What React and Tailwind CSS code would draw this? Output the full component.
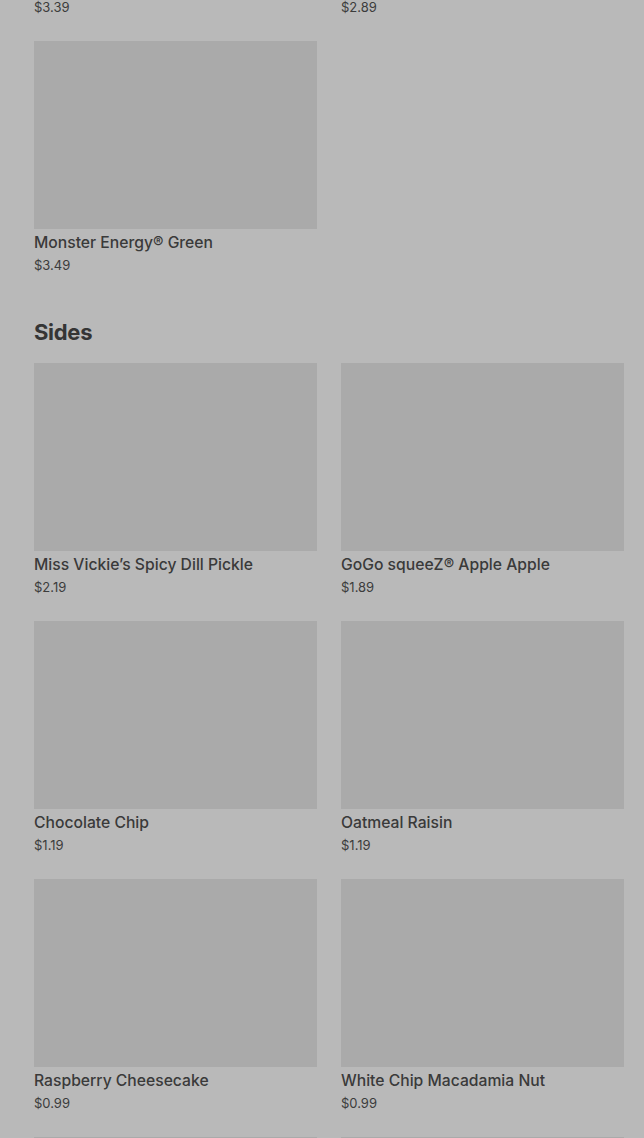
import React from 'react';

const SECTIONS = [
  {
    title: null,
    items: [
      { name: 'Coca-Cola®', price: '$3.39' },
      { name: 'Bottled Water', price: '$2.89' },
      { name: 'Monster Energy® Green', price: '$3.49' },
    ],
  },
  {
    title: 'Sides',
    items: [
      { name: 'Miss Vickie’s Spicy Dill Pickle', price: '$2.19' },
      { name: 'GoGo squeeZ® Apple Apple', price: '$1.89' },
      { name: 'Chocolate Chip', price: '$1.19' },
      { name: 'Oatmeal Raisin', price: '$1.19' },
      { name: 'Raspberry Cheesecake', price: '$0.99' },
      { name: 'White Chip Macadamia Nut', price: '$0.99' },
      { name: 'Double Chocolate Chip', price: '$0.99' },
      { name: 'Sugar Cookie', price: '$0.99' },
    ],
  },
];

function ItemCard({ item }) {
  return (
    <div className="flex flex-col">
      <div className="h-[188px] w-full bg-[#aaaaaa]" />
      <p className="mt-[2px] text-[15.7px] leading-[24px] font-medium text-[#3a3a3a] truncate">
        {item.name}
      </p>
      <p className="text-[13px] leading-[20px] text-[#3c3c3c]">{item.price}</p>
    </div>
  );
}

export default function App() {
  return (
    <div
      className="h-[1138px] w-full overflow-hidden bg-[#b9b9b9]"
      style={{ fontFamily: "Inter, 'Noto Sans', sans-serif" }}
    >
      <div className="mt-[-217px] pl-[34px] pr-[20px]">
        {SECTIONS.map((section, i) => (
          <section key={i} className={i > 0 ? 'mt-[41px]' : ''}>
            {section.title && (
              <h2 className="mb-[15px] text-[22px] leading-[32px] font-bold tracking-[-0.3px] text-[#353535]">
                {section.title}
              </h2>
            )}
            <div className="grid grid-cols-2 gap-x-[24px] gap-y-[24px]">
              {section.items.map((item, j) => (
                <ItemCard key={j} item={item} />
              ))}
            </div>
          </section>
        ))}
      </div>
    </div>
  );
}
